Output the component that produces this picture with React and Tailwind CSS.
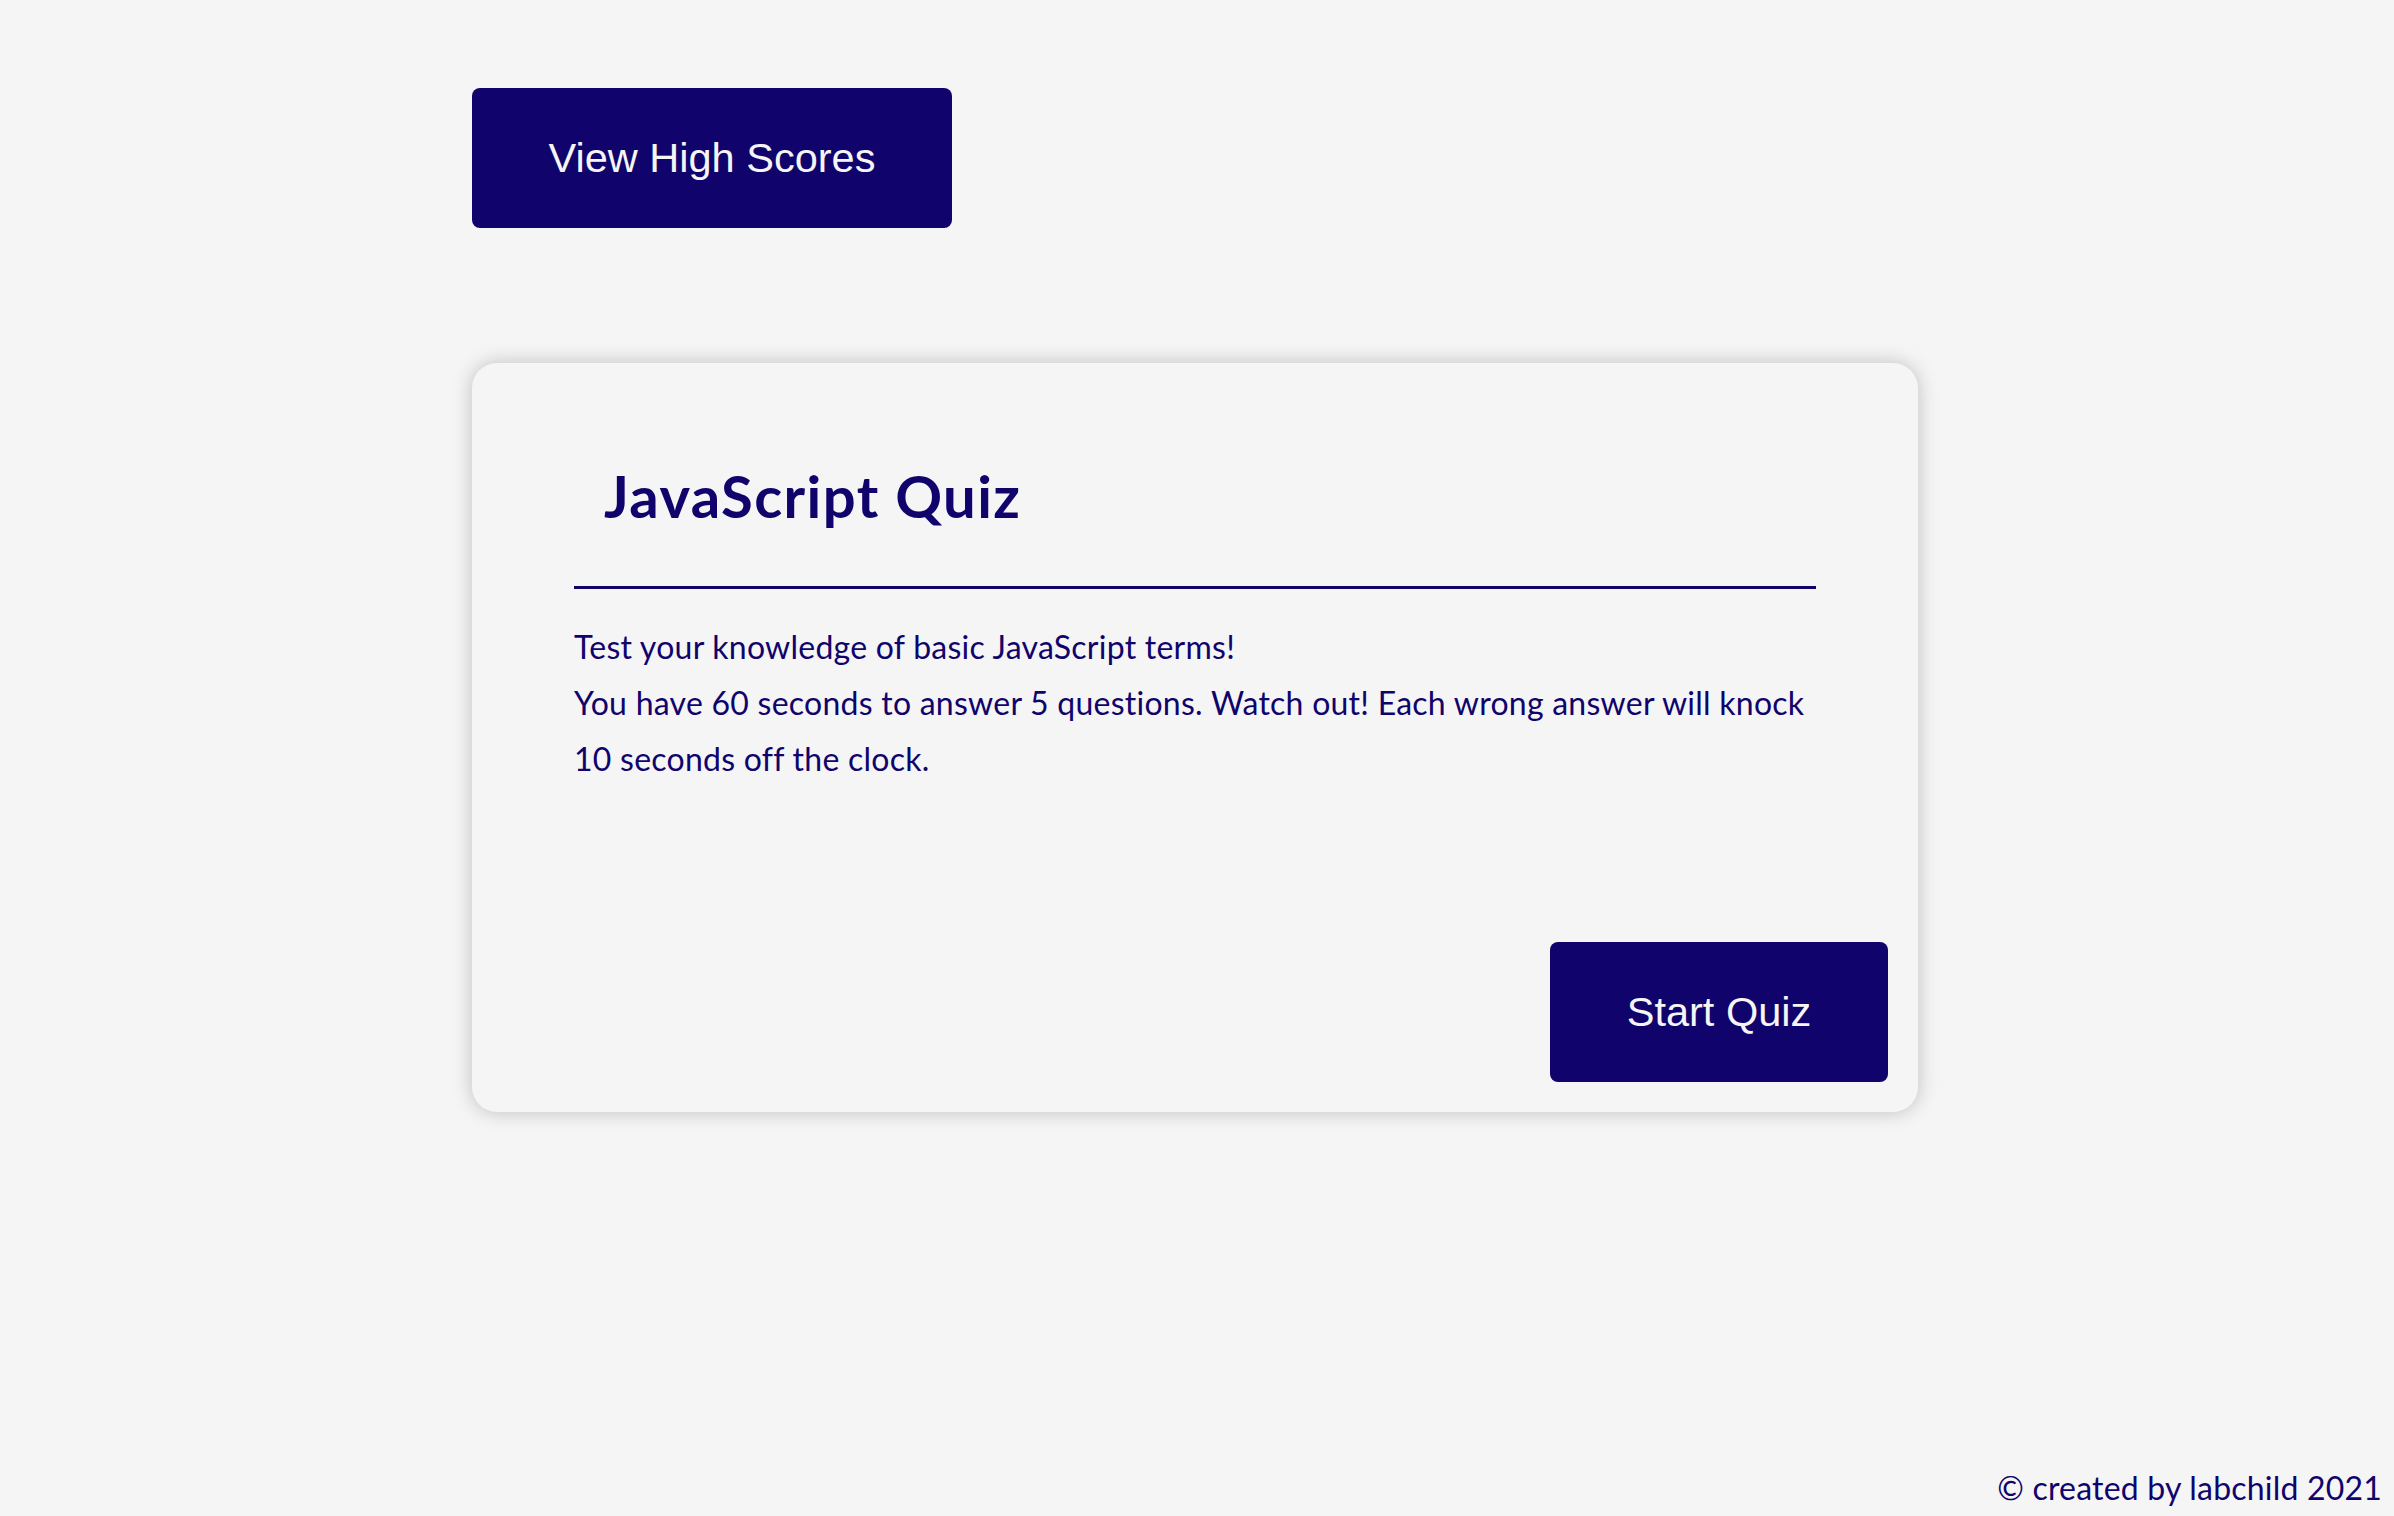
export default function App() {
  const navy = "text-[#10046c]";
  return (
    <div className="min-h-screen bg-[#f5f5f5] flex flex-col" style={{ minHeight: "1516px" }}>
      <main className="w-[1446px] ml-[472px] pt-[88px]">
        <button
          className="h-[140px] w-[480px] rounded-[8px] bg-[#10046c] text-[#f5f5f5] text-[41.5px] leading-none"
          style={{ fontFamily: '"Liberation Sans", Arial, sans-serif' }}
        >
          View High Scores
        </button>
        <section className="mt-[135px] h-[749px] rounded-[25px] bg-[#f5f5f5] shadow-[0_0_20px_rgba(0,0,0,0.22)] px-[30px] pb-[30px] flex flex-col">
          <div className={`mx-[72px] pt-[104px] ${navy}`} style={{ fontFamily: 'Lato, "Open Sans", sans-serif' }}>
            <h1 className="pl-[30px] text-[58px] font-bold leading-none tracking-[1.4px]">JavaScript Quiz</h1>
            <div className="mt-[61px] border-t-[3px] border-[#10046c]" />
            <p className="mt-[30px] text-[32px] leading-[56px] tracking-[0.25px]">
              Test your knowledge of basic JavaScript terms!
              <br />
              You have 60 seconds to answer 5 questions. Watch out! Each wrong answer will knock 10 seconds off the clock.
            </p>
          </div>
          <div className="mt-auto flex justify-end">
            <button
              className="h-[140px] w-[338px] rounded-[8px] bg-[#10046c] text-[#f5f5f5] text-[41.5px] leading-none"
              style={{ fontFamily: '"Liberation Sans", Arial, sans-serif' }}
            >
              Start Quiz
            </button>
          </div>
        </section>
      </main>
      <footer
        className={`mt-auto text-right pr-[12px] pb-[12px] text-[32px] leading-none tracking-[0.2px] ${navy}`}
        style={{ fontFamily: 'Lato, "Open Sans", sans-serif' }}
      >
        © created by labchild 2021
      </footer>
    </div>
  );
}
